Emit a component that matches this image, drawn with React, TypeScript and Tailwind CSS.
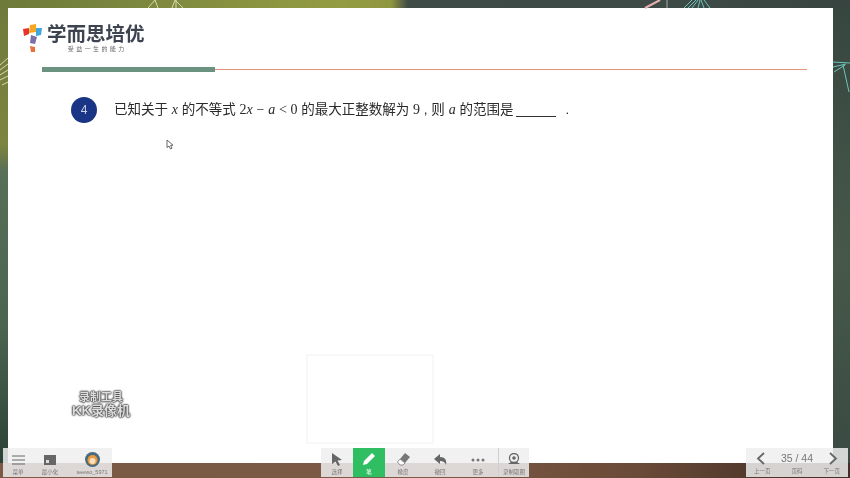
import React from "react";

const cjk = "font-['Liberation_Sans','Noto_Sans_CJK_SC',sans-serif]";
const M = ({ children }: { children: React.ReactNode }) => (
  <span className="font-['Liberation_Serif',serif] text-[14px]">{children}</span>
);
const I = ({ children }: { children: React.ReactNode }) => (
  <span className="font-['Liberation_Serif',serif] italic text-[14px]">{children}</span>
);

function Logo() {
  return (
    <svg width="20" height="29" viewBox="0 0 20 29" className="shrink-0">
      <path d="M7 1 L13 0 L13 8 L6 9 Z" fill="#f5a623" />
      <path d="M0 5 L6 4 L6 10 L1 12 Z" fill="#e8352c" />
      <path d="M13 4 L19 4 L18 11 L13 12 Z" fill="#3fa7dc" />
      <path d="M8 11 L14 13 L12 20 L7 19 Z" fill="#7a6fa6" />
      <path d="M7 22 L12 23 L12 28 L8 28 Z" fill="#e8703a" />
    </svg>
  );
}

function ToolLabel({ children, white }: { children: string; white?: boolean }) {
  return (
    <span className={`text-[5.5px] leading-[6px] whitespace-nowrap ${white ? "text-white" : "text-[#777]"}`}>{children}</span>
  );
}

function Tool({ label, icon, active, w = "w-8" }: { label: string; icon: React.ReactNode; active?: boolean; w?: string }) {
  return (
    <div className={`${w} h-full flex flex-col items-center justify-end pb-[2px] gap-[3px] ${active ? "bg-[#2fbf62]" : ""}`}>
      {icon}
      <ToolLabel white={active}>{label}</ToolLabel>
    </div>
  );
}

export default function App() {
  return (
    <div className={`relative w-[850px] h-[478px] overflow-hidden flex flex-col bg-[#3b4a3c] blur-[0.4px] ${cjk}`}>
      <div className="h-[8px] shrink-0 bg-[linear-gradient(to_right,#6c7a3a_0%,#7f8a3e_20%,#949c42_40%,#8f9640_46%,#3f4b47_48%,#3d4a46_80%,#37443f_100%)]" />
      <div className="flex-1 flex min-h-0">
        <div className="w-[8px] bg-[linear-gradient(to_bottom,#6f7a3c_0%,#7d843f_30%,#586f58_36%,#4a6450_70%,#2b4236_100%)]" />
        <main className="w-[825px] bg-white flex flex-col pt-[15px] pl-[15px]">
          <div className="flex items-center gap-[4px] h-[30px]">
            <Logo />
            <div className="flex flex-col items-center">
              <span className="text-[19.5px] leading-[21px] font-bold text-[#3d4450]">学而思培优</span>
              <span className="text-[6px] leading-[8px] text-[#666] tracking-[2.4px] ml-[3px]">受益一生的能力</span>
            </div>
          </div>
          <div className="flex items-center mt-[14px] ml-[19px] w-[765px]">
            <div className="w-[173px] h-[5px] bg-[#6b9280]" />
            <div className="flex-1 h-[1.5px] bg-[#e39580]" />
          </div>
          <div className="flex items-center mt-[25px] ml-[48px] text-[13.5px] text-[#2a2a2a]">
            <div className="w-[26px] h-[26px] rounded-full bg-[#1a3585] text-[#c9d2ea] flex items-center justify-center text-[12px] mr-[17px]">4</div>
            <span className="whitespace-pre">
              已知关于 <I>x</I> 的不等式 <M>2</M><I>x</I> <M>−</M> <I>a</I> <M>&lt;</M> <M>0</M> 的最大正整数解为 <M>9</M> , 则 <I>a</I> 的范围是
            </span>
            <span className="w-[40px] h-[1.5px] bg-[#333] self-end mb-[6px] ml-[3px]" />
            <span className="ml-[9px]">.</span>
          </div>
        </main>
        <div className="flex-1 bg-[linear-gradient(to_bottom,#37463f_0%,#47584a_55%,#3a4a42_100%)]" />
      </div>
      <div className="h-[15px] shrink-0 bg-[linear-gradient(to_right,#7a5a45_0%,#7c5a45_50%,#6a4a38_75%,#4f382c_90%,#3f2f28_100%)]" />

      {/* background leaf drawings peeking around the slide */}
      <svg className="absolute left-0 top-0" width="850" height="100" viewBox="0 0 850 100" fill="none">
        <g stroke="#d8d8b0" strokeWidth="1">
          <path d="M148 8 L155 0 M155 0 L158 8 M172 8 L175 0 L183 8 M176 0 L176 8" />
          <path d="M0 65 L8 58 M0 70 L8 64 M0 75 L8 70 M0 80 L8 76 M2 85 L8 82" />
        </g>
        <path d="M645 8 L660 0" stroke="#e6b0b0" strokeWidth="2" />
        <path d="M667 0 V8" stroke="#c0c8b8" strokeWidth="0.8" />
        <g stroke="#6fc4bc" strokeWidth="1">
          <path d="M684 8 L692 0 M688 8 L696 0 M692 8 L698 0 M698 8 L700 0 M704 8 L701 0 M710 8 L704 0" />
          <path d="M833 62 L850 63 M833 67 L846 64 M834 72 L845 65 M843 65 L849 92" />
        </g>
      </svg>

      {/* cursor */}
      <svg className="absolute left-[166px] top-[139px]" width="8" height="11" viewBox="0 0 8 11">
        <path d="M1 1 L1 8.5 L3 7 L4.5 10 L6 9.2 L4.6 6.4 L7 6.2 Z" fill="#fff" stroke="#444" strokeWidth="0.8" />
      </svg>

      {/* faint camera placeholder */}
      <div className="absolute left-[306px] top-[354px] w-[128px] h-[90px] border-2 border-[#f8f8f8]" />

      {/* watermark */}
      <div className="absolute left-[71px] top-[390px] w-[60px] flex flex-col items-center font-bold text-[#dcdcdc] [text-shadow:0_0_1px_#444,0_0_2px_#444,0_0_2px_#444,0_0_2px_#444]">
        <span className="text-[11px] leading-[14px] whitespace-nowrap">录制工具</span>
        <span className="text-[13px] leading-[14px] whitespace-nowrap">KK录像机</span>
      </div>

      {/* left toolbar */}
      <div className="absolute left-[3px] top-[448px] w-[109px] h-[29px] bg-[#eeeeee]/85 flex">
        <div className="w-[30px] flex flex-col items-center justify-end pb-[2px] gap-[4px]">
          <svg width="13" height="10" viewBox="0 0 13 10" stroke="#666" strokeWidth="1.2"><path d="M0 1h13M0 5h13M0 9h13" /></svg>
          <ToolLabel>菜单</ToolLabel>
        </div>
        <div className="w-[34px] flex flex-col items-center justify-end pb-[2px] gap-[4px]">
          <svg width="12" height="10" viewBox="0 0 12 10"><rect width="12" height="10" fill="#666" /><rect x="2" y="5" width="3" height="3" fill="#ddd" /></svg>
          <ToolLabel>最小化</ToolLabel>
        </div>
        <div className="flex-1 pl-[5px] flex flex-col items-center justify-end pb-[2px] gap-[2px]">
          <svg width="15" height="15" viewBox="0 0 15 15">
            <circle cx="7.5" cy="7.5" r="7.5" fill="#4a6a80" />
            <circle cx="7.5" cy="8" r="5" fill="#e89a3c" />
            <circle cx="7.5" cy="9" r="3" fill="#f8e0c0" />
          </svg>
          <ToolLabel>seewo_5971</ToolLabel>
        </div>
      </div>

      {/* center toolbar */}
      <div className="absolute left-[321px] top-[448px] h-[29px] w-[208px] bg-[#eeeeee]/85 flex">
        <Tool label="选择" icon={<svg width="12" height="13" viewBox="0 0 12 13"><path d="M1 0 L11 7 L6.5 7.5 L9 12 L7 13 L4.5 8.5 L1 11 Z" fill="#666" /></svg>} />
        <Tool label="笔" active icon={<svg width="14" height="14" viewBox="0 0 14 14"><path d="M10 1 L13 4 L5 12 L1 13 L2 9 Z" fill="#fff" /></svg>} />
        <Tool label="橡皮" w="w-[36px]" icon={<svg width="13" height="13" viewBox="0 0 13 13"><path d="M8 0 L13 4 L8 10 L3 6 Z" fill="#777" /><path d="M3 6 L8 10 L6 12 L3 12 L0.5 9 Z" fill="#fff" stroke="#777" strokeWidth="0.8" /></svg>} />
        <Tool label="撤回" w="w-[38px]" icon={<svg width="13" height="12" viewBox="0 0 13 12"><path d="M6 0 L0 5 L6 10 L6 7 C9 7 11 8 12 11 C13 6 11 3 6 3 Z" fill="#666" /></svg>} />
        <Tool label="更多" w="w-[38px]" icon={<svg width="14" height="4" viewBox="0 0 14 4" className="mb-[4px] mt-[4px]"><circle cx="2" cy="2" r="1.5" fill="#777" /><circle cx="7" cy="2" r="1.5" fill="#777" /><circle cx="12" cy="2" r="1.5" fill="#777" /></svg>} />
        <div className="w-px h-full bg-[#cfcfcf] ml-[1px]" />
        <div className="flex-1 flex flex-col items-center justify-end pb-[2px] gap-[3px]">
          <svg width="14" height="13" viewBox="0 0 14 13">
            <circle cx="7" cy="5" r="4.5" fill="none" stroke="#666" strokeWidth="1.3" />
            <circle cx="7" cy="5" r="1.8" fill="#666" />
            <path d="M1 11 H13 L10 9 H4 Z" fill="#666" />
          </svg>
          <ToolLabel>录制取图</ToolLabel>
        </div>
      </div>

      {/* right toolbar */}
      <div className="absolute left-[746px] top-[448px] w-[102px] h-[29px] bg-[#eeeeee]/85 flex flex-col">
        <div className="flex items-center justify-between px-[10px] h-[19px] pt-[2px]">
          <svg width="9" height="13" viewBox="0 0 9 13" fill="none" stroke="#666" strokeWidth="1.8"><path d="M8 1 L2 6.5 L8 12" /></svg>
          <span className="text-[10.5px] text-[#777]">35 / 44</span>
          <svg width="9" height="13" viewBox="0 0 9 13" fill="none" stroke="#666" strokeWidth="1.8"><path d="M1 1 L7 6.5 L1 12" /></svg>
        </div>
        <div className="flex justify-between px-[8px] pt-[1px]">
          <ToolLabel>上一页</ToolLabel>
          <ToolLabel>页码</ToolLabel>
          <ToolLabel>下一页</ToolLabel>
        </div>
      </div>
    </div>
  );
}
